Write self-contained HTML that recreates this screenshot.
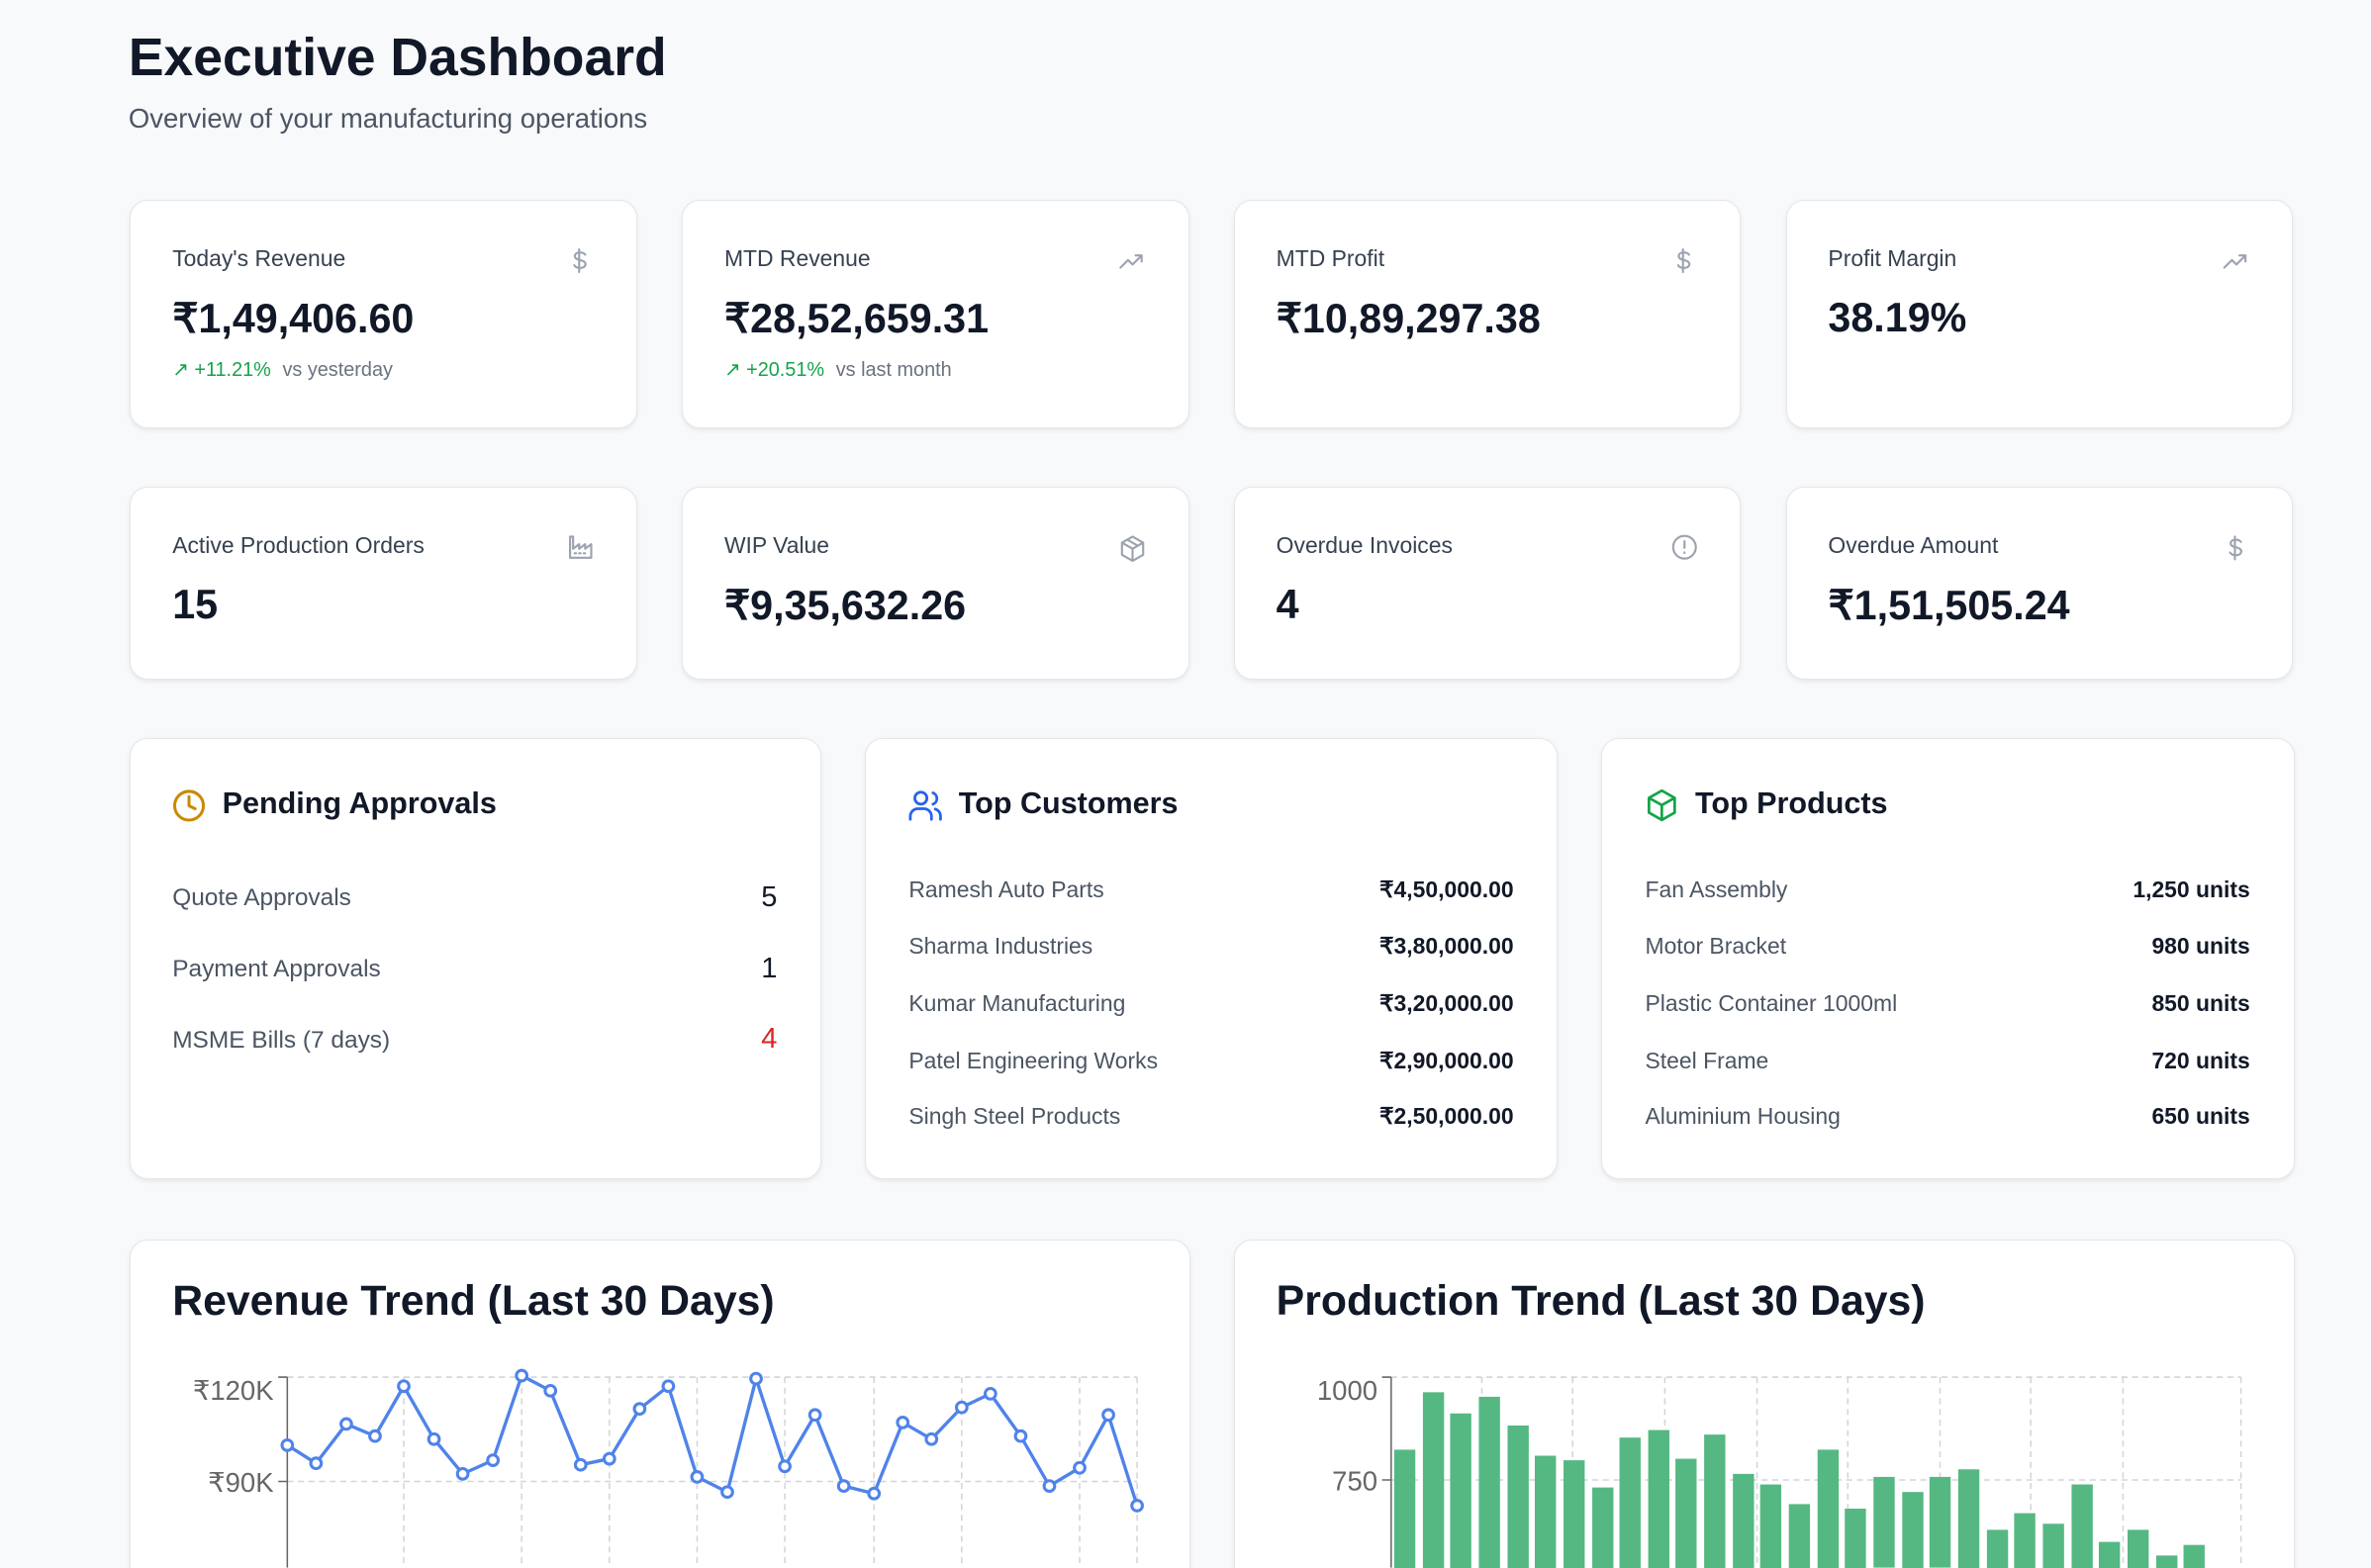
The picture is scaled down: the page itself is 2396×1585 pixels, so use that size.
<!DOCTYPE html>
<html><head><meta charset="utf-8">
<style>
html,body{margin:0;padding:0;background:#f8f9fb;overflow:hidden}
#p{position:relative;width:1568px;height:1037px;zoom:1.52806;font-family:"Liberation Sans",sans-serif;color:#111827}
.c{position:absolute;background:#fff;border:1px solid #e5e7eb;border-radius:12px;box-shadow:0 1px 3px rgba(0,0,0,.08)}
.t{position:absolute;white-space:nowrap}
.lbl{font-size:15px;color:#374151}
.val{font-size:27px;font-weight:bold;color:#111827}
.h{font-size:20px;font-weight:bold;color:#111827}
.row{position:absolute;font-size:15px;color:#4b5563;white-space:nowrap}
.rv{position:absolute;font-size:15px;color:#111827;font-weight:bold;white-space:nowrap;text-align:right}
</style></head><body><div id="p">
<div class="t" style="left:85px;top:18px;font-size:35px;font-weight:bold;color:#111827">Executive Dashboard</div>
<div class="t" style="left:85px;top:68px;font-size:18px;color:#4b5563">Overview of your manufacturing operations</div>

<!-- row 1 -->
<div class="c" style="left:86px;top:132px;width:334px;height:150px"></div>
<div class="c" style="left:451px;top:132px;width:334px;height:150px"></div>
<div class="c" style="left:816px;top:132px;width:334px;height:150px"></div>
<div class="c" style="left:1181px;top:132px;width:334px;height:150px"></div>
<div class="t lbl" style="left:114px;top:162px">Today's Revenue</div>
<div class="t lbl" style="left:479px;top:162px">MTD Revenue</div>
<div class="t lbl" style="left:844px;top:162px">MTD Profit</div>
<div class="t lbl" style="left:1209px;top:162px">Profit Margin</div>
<div class="t val" style="left:114px;top:195px">₹1,49,406.60</div>
<div class="t val" style="left:479px;top:195px">₹28,52,659.31</div>
<div class="t val" style="left:844px;top:195px">₹10,89,297.38</div>
<div class="t val" style="left:1209px;top:195px">38.19%</div>
<div class="t" style="left:114px;top:237px;font-size:13px;color:#16a34a">↗ +11.21% <span style="color:#6b7280;margin-left:4px">vs yesterday</span></div>
<div class="t" style="left:479px;top:237px;font-size:13px;color:#16a34a">↗ +20.51% <span style="color:#6b7280;margin-left:4px">vs last month</span></div>

<!-- row 2 -->
<div class="c" style="left:86px;top:322px;width:334px;height:126px"></div>
<div class="c" style="left:451px;top:322px;width:334px;height:126px"></div>
<div class="c" style="left:816px;top:322px;width:334px;height:126px"></div>
<div class="c" style="left:1181px;top:322px;width:334px;height:126px"></div>
<div class="t lbl" style="left:114px;top:352px">Active Production Orders</div>
<div class="t lbl" style="left:479px;top:352px">WIP Value</div>
<div class="t lbl" style="left:844px;top:352px">Overdue Invoices</div>
<div class="t lbl" style="left:1209px;top:352px">Overdue Amount</div>
<div class="t val" style="left:114px;top:385px">15</div>
<div class="t val" style="left:479px;top:385px">₹9,35,632.26</div>
<div class="t val" style="left:844px;top:385px">4</div>
<div class="t val" style="left:1209px;top:385px">₹1,51,505.24</div>

<!-- row 3 -->
<div class="c" style="left:86px;top:488px;width:456px;height:291px"></div>
<div class="c" style="left:572px;top:488px;width:457px;height:291px"></div>
<div class="c" style="left:1059px;top:488px;width:457px;height:291px"></div>

<svg style="position:absolute;left:0;top:0;z-index:2" width="1568" height="1037" fill="none" stroke="#9ca3af" stroke-width="1.4" stroke-linecap="round" stroke-linejoin="round">
 <g id="d"><path d="M383 165v15M387 168.5c-.6-1-1.8-1.5-3.5-1.5-2 0-3.3 1-3.3 2.4 0 3.5 7 1.8 7 5.4 0 1.5-1.5 2.5-3.6 2.5-1.8 0-3.2-.7-3.8-1.8"/></g>
 <use href="#d" x="730" y="0"/><use href="#d" x="1095" y="190"/>
 <path d="M741 177l5-5 3 3 6-6M751 169h4v4"/>
 <path d="M1471 177l5-5 3 3 6-6M1481 169h4v4"/>
 <path d="M377 355v14h14v-9l-4 3v-3l-4 3v-3l-4 3v-8zM380 366h1M383 366h1M386 366h1"/>
 <path d="M749 355l7 4v8l-7 4-7-4v-8zM742 359l7 4 7-4M749 363v8M745.5 357l7 4"/>
 <circle cx="1114" cy="362" r="7.5"/><path d="M1114 358v4.5M1114 365.5v.3"/>
 <circle cx="125" cy="533" r="9.5" stroke="#ca8a04" stroke-width="2"/><path d="M125 527v6l4 2" stroke="#ca8a04" stroke-width="2"/>
 <g stroke="#2563eb" stroke-width="1.8"><circle cx="609" cy="528" r="4"/><path d="M602 542v-2a5 5 0 0 1 5-5h4a5 5 0 0 1 5 5v2M617 524.5a4 4 0 0 1 0 7.5M622 542v-2a5 5 0 0 0-3.5-4.8"/></g>
 <g stroke="#16a34a" stroke-width="1.8"><path d="M1099 523l8.5 4.8v9.8l-8.5 4.8-8.5-4.8v-9.8zM1090.5 527.8l8.5 4.8 8.5-4.8M1099 532.6v9.8"/></g>
</svg>

<div class="t h" style="left:147px;top:520px">Pending Approvals</div>
<div class="t h" style="left:634px;top:520px">Top Customers</div>
<div class="t h" style="left:1121px;top:520px">Top Products</div>
<div class="row" style="left:114px;top:585px;font-size:16px">Quote Approvals</div>
<div class="row" style="left:114px;top:632px;font-size:16px">Payment Approvals</div>
<div class="row" style="left:114px;top:679px;font-size:16px">MSME Bills (7 days)</div>
<div class="rv" style="right:1054px;top:583px;font-size:19px;font-weight:normal">5</div>
<div class="rv" style="right:1054px;top:630px;font-size:19px;font-weight:normal">1</div>
<div class="rv" style="right:1054px;top:677px;font-size:19px;font-weight:normal;color:#dc2626">4</div>

<div class="row" style="left:601px;top:580px">Ramesh Auto Parts</div>
<div class="row" style="left:601px;top:617px">Sharma Industries</div>
<div class="row" style="left:601px;top:655px">Kumar Manufacturing</div>
<div class="row" style="left:601px;top:693px">Patel Engineering Works</div>
<div class="row" style="left:601px;top:730px">Singh Steel Products</div>
<div class="rv" style="right:567px;top:580px">₹4,50,000.00</div>
<div class="rv" style="right:567px;top:617px">₹3,80,000.00</div>
<div class="rv" style="right:567px;top:655px">₹3,20,000.00</div>
<div class="rv" style="right:567px;top:693px">₹2,90,000.00</div>
<div class="rv" style="right:567px;top:730px">₹2,50,000.00</div>

<div class="row" style="left:1088px;top:580px">Fan Assembly</div>
<div class="row" style="left:1088px;top:617px">Motor Bracket</div>
<div class="row" style="left:1088px;top:655px">Plastic Container 1000ml</div>
<div class="row" style="left:1088px;top:693px">Steel Frame</div>
<div class="row" style="left:1088px;top:730px">Aluminium Housing</div>
<div class="rv" style="right:80px;top:580px">1,250 units</div>
<div class="rv" style="right:80px;top:617px">980 units</div>
<div class="rv" style="right:80px;top:655px">850 units</div>
<div class="rv" style="right:80px;top:693px">720 units</div>
<div class="rv" style="right:80px;top:730px">650 units</div>

<!-- row 4 -->
<div class="c" style="left:86px;top:820px;width:700px;height:260px"></div>
<div class="c" style="left:816px;top:820px;width:700px;height:260px"></div>
<div class="t" style="left:114px;top:845px;font-size:28px;font-weight:bold">Revenue Trend (Last 30 Days)</div>
<div class="t" style="left:844px;top:845px;font-size:28px;font-weight:bold">Production Trend (Last 30 Days)</div>

<svg style="position:absolute;left:0;top:0" width="1568" height="1037" font-family="Liberation Sans, sans-serif">
 <g stroke="#d1d5db" stroke-dasharray="4 3" stroke-width="1">
  <path d="M190 911H752M190 980H752"/>
  <path d="M267 911V1037M345 911V1037M403 911V1037M461 911V1037M519 911V1037M578 911V1037M636 911V1037M714 911V1037M752 911V1037"/>
  <path d="M920 911H1482M920 979H1482"/>
  <path d="M980 911V1037M1040 911V1037M1101 911V1037M1162 911V1037M1222 911V1037M1283 911V1037M1343 911V1037M1404 911V1037M1482 911V1037"/>
 </g>
 <g stroke="#666" stroke-width="1"><path d="M190 911V1037M184 911H190M184 980H190M920 911V1037M914 911H920M914 979H920"/></g>
 <g fill="#666" font-size="18" text-anchor="end"><text x="181" y="926">₹120K</text><text x="181" y="987">₹90K</text><text x="911" y="926">1000</text><text x="911" y="986">750</text></g>
 <polyline fill="none" stroke="#4f83ea" stroke-width="2.2" stroke-linejoin="round" points="190,956 209,968 229,942 248,950 267,917 287,952 306,975 326,966 345,910 364,920 384,969 403,965 423,932 442,917 461,977 481,987 500,912 519,970 539,936 558,983 578,988 597,941 616,952 636,931 655,922 675,950 694,983 714,971 733,936 752,996"/>
 <g fill="#fff" stroke="#4f83ea" stroke-width="2">
 <circle cx="190" cy="956" r="3.5"/><circle cx="209" cy="968" r="3.5"/><circle cx="229" cy="942" r="3.5"/><circle cx="248" cy="950" r="3.5"/><circle cx="267" cy="917" r="3.5"/><circle cx="287" cy="952" r="3.5"/><circle cx="306" cy="975" r="3.5"/><circle cx="326" cy="966" r="3.5"/><circle cx="345" cy="910" r="3.5"/><circle cx="364" cy="920" r="3.5"/><circle cx="384" cy="969" r="3.5"/><circle cx="403" cy="965" r="3.5"/><circle cx="423" cy="932" r="3.5"/><circle cx="442" cy="917" r="3.5"/><circle cx="461" cy="977" r="3.5"/><circle cx="481" cy="987" r="3.5"/><circle cx="500" cy="912" r="3.5"/><circle cx="519" cy="970" r="3.5"/><circle cx="539" cy="936" r="3.5"/><circle cx="558" cy="983" r="3.5"/><circle cx="578" cy="988" r="3.5"/><circle cx="597" cy="941" r="3.5"/><circle cx="616" cy="952" r="3.5"/><circle cx="636" cy="931" r="3.5"/><circle cx="655" cy="922" r="3.5"/><circle cx="675" cy="950" r="3.5"/><circle cx="694" cy="983" r="3.5"/><circle cx="714" cy="971" r="3.5"/><circle cx="733" cy="936" r="3.5"/><circle cx="752" cy="996" r="3.5"/>
 </g>
 <g fill="#55b882">
 <rect x="922" y="959" width="14" height="80"/><rect x="941" y="921" width="14" height="120"/><rect x="959" y="935" width="14" height="110"/><rect x="978" y="924" width="14" height="120"/><rect x="997" y="943" width="14" height="100"/><rect x="1015" y="963" width="14" height="80"/><rect x="1034" y="966" width="14" height="80"/><rect x="1053" y="984" width="14" height="60"/><rect x="1071" y="951" width="14" height="90"/><rect x="1090" y="946" width="14" height="95"/><rect x="1108" y="965" width="14" height="80"/><rect x="1127" y="949" width="14" height="95"/><rect x="1146" y="975" width="14" height="70"/><rect x="1164" y="982" width="14" height="60"/><rect x="1183" y="995" width="14" height="50"/><rect x="1202" y="959" width="14" height="80"/><rect x="1220" y="998" width="14" height="40"/><rect x="1239" y="977" width="14" height="60"/><rect x="1258" y="987" width="14" height="55"/><rect x="1276" y="977" width="14" height="60"/><rect x="1295" y="972" width="14" height="70"/><rect x="1314" y="1012" width="14" height="30"/><rect x="1332" y="1001" width="14" height="40"/><rect x="1351" y="1008" width="14" height="30"/><rect x="1370" y="982" width="14" height="60"/><rect x="1388" y="1020" width="14" height="20"/><rect x="1407" y="1012" width="14" height="30"/><rect x="1426" y="1029" width="14" height="10"/><rect x="1444" y="1022" width="14" height="20"/>
 </g>
</svg>
</div></body></html>
